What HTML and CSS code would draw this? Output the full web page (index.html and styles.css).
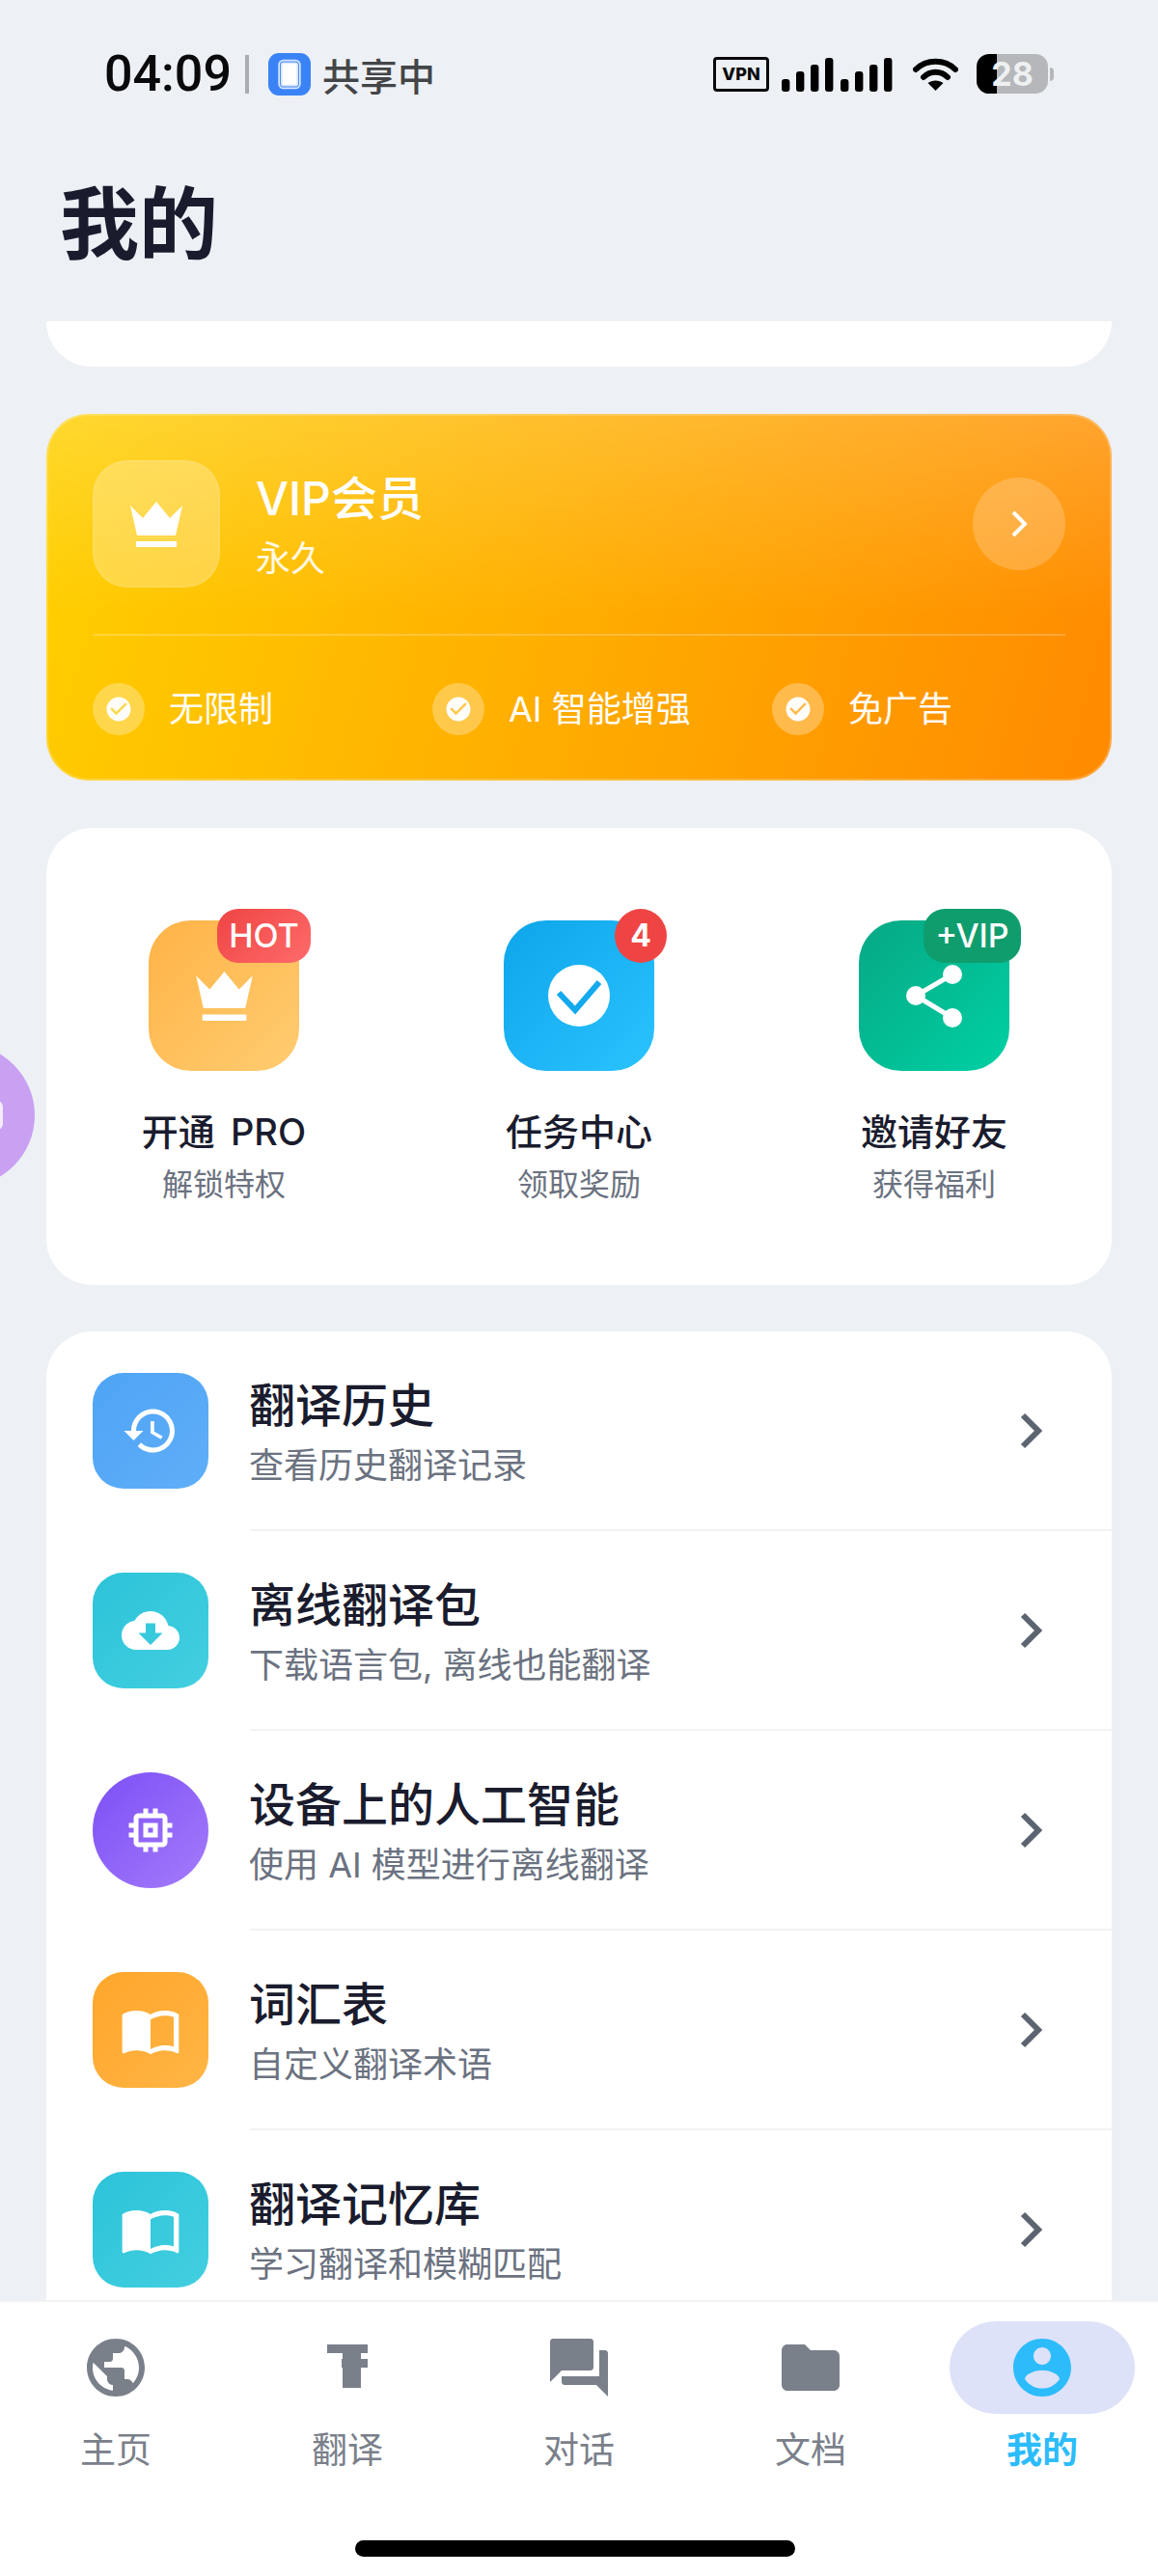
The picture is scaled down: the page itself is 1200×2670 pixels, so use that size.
FILE: index.html
```html
<!DOCTYPE html>
<html lang="zh-CN">
  <head>
    <meta charset="UTF-8" />
    <meta name="viewport" content="width=device-width, initial-scale=1.0" />
    <title>我的</title>
    <link rel="stylesheet" href="styles.css">
  </head>
  <body>
    <header class="top">
      <div class="status">
        <div class="status-left">
          <span class="time">04:09</span>
          <span class="status-sep"></span>
          <span class="share-app"><span class="share-app-inner"></span></span>
          <span class="share-text">共享中</span>
        </div>
        <div class="status-right">
          <span class="vpn">VPN</span>
          <svg class="signal" width="115" height="36" viewBox="0 0 115 36">
            <rect x="0" y="23" width="8.4" height="13" rx="3" />
            <rect x="15" y="15" width="8.4" height="21" rx="3" />
            <rect x="30" y="8" width="8.4" height="28" rx="3" />
            <rect x="45" y="1" width="8.4" height="35" rx="3" />
            <rect x="61" y="23" width="8.4" height="13" rx="3" />
            <rect x="76" y="15" width="8.4" height="21" rx="3" />
            <rect x="91" y="8" width="8.4" height="28" rx="3" />
            <rect x="106" y="1" width="8.4" height="35" rx="3" />
          </svg>
          <svg class="wifi" width="47" height="36" viewBox="0 0 47 36">
            <path d="M3 13C14 2 33 2 44 13M11 21C18 14 29 14 36 21" fill="none" stroke="#000" stroke-width="6" stroke-linecap="round" />
            <path d="M23.5 35L15.5 27C20 23.5 27 23.5 31.5 27Z" />
          </svg>
          <span class="battery">28</span>
          <span class="battery-tip"></span>
        </div>
      </div>
      <h1 class="page-title">我的</h1>
    </header>

    <main class="scroll">
      <div class="stub-card"></div>

      <section class="vip-card">
        <div class="vip-top">
          <div class="vip-icon">
            <svg width="54" height="47" viewBox="0 0 54 47"><path d="M0 4L13 17L27 0L41 17L54 4L47 35H7ZM6 41H48V47H6Z" fill="#fff" /></svg>
          </div>
          <div class="vip-text">
            <div class="vip-title">VIP会员</div>
            <div class="vip-sub">永久</div>
          </div>
          <div class="vip-arrow">
            <svg width="18" height="28" viewBox="0 0 18 28"><path d="M3 2L15 14L3 26" fill="none" stroke="#fff" stroke-width="4" /></svg>
          </div>
        </div>
        <div class="vip-line"></div>
        <div class="vip-features">
          <div class="feature">
            <span class="feature-dot"><svg width="30" height="30" viewBox="0 0 24 24"><path d="M12 2C6.48 2 2 6.48 2 12s4.48 10 10 10 10-4.48 10-10S17.52 2 12 2zm-2 15l-5-5 1.41-1.41L10 14.17l7.59-7.59L19 8l-9 9z" fill="#fff" /></svg></span>
            无限制
          </div>
          <div class="feature">
            <span class="feature-dot"><svg width="30" height="30" viewBox="0 0 24 24"><path d="M12 2C6.48 2 2 6.48 2 12s4.48 10 10 10 10-4.48 10-10S17.52 2 12 2zm-2 15l-5-5 1.41-1.41L10 14.17l7.59-7.59L19 8l-9 9z" fill="#fff" /></svg></span>
            AI 智能增强
          </div>
          <div class="feature">
            <span class="feature-dot"><svg width="30" height="30" viewBox="0 0 24 24"><path d="M12 2C6.48 2 2 6.48 2 12s4.48 10 10 10 10-4.48 10-10S17.52 2 12 2zm-2 15l-5-5 1.41-1.41L10 14.17l7.59-7.59L19 8l-9 9z" fill="#fff" /></svg></span>
            免广告
          </div>
        </div>
      </section>

      <section class="shortcuts">
        <div class="shortcut">
          <div class="shortcut-icon icon-pro">
            <span class="badge badge-hot">HOT</span>
            <svg width="59" height="51" viewBox="0 0 54 47"><path d="M0 4L13 17L27 0L41 17L54 4L47 35H7ZM6 41H48V47H6Z" fill="#fff" /></svg>
          </div>
          <div class="shortcut-name">开通 PRO</div>
          <div class="shortcut-sub">解锁特权</div>
        </div>
        <div class="shortcut">
          <div class="shortcut-icon icon-task">
            <span class="badge badge-num">4</span>
            <svg width="64" height="64" viewBox="0 0 64 64"><circle cx="32" cy="32" r="32" fill="#fff" /><path d="M11 29L28 47L53 18" fill="none" stroke="#12a9ee" stroke-width="6" /></svg>
          </div>
          <div class="shortcut-name">任务中心</div>
          <div class="shortcut-sub">领取奖励</div>
        </div>
        <div class="shortcut">
          <div class="shortcut-icon icon-invite">
            <span class="badge badge-vip">+VIP</span>
            <svg width="58" height="65" viewBox="0 0 58 65"><path d="M48 10L10 32L48 55" fill="none" stroke="#fff" stroke-width="5" /><circle cx="48" cy="10" r="10" fill="#fff" /><circle cx="10" cy="32" r="10" fill="#fff" /><circle cx="48" cy="55" r="10" fill="#fff" /></svg>
          </div>
          <div class="shortcut-name">邀请好友</div>
          <div class="shortcut-sub">获得福利</div>
        </div>
      </section>

      <section class="list-card">
        <div class="row">
          <div class="row-icon icon-history">
            <svg width="60" height="60" viewBox="0 0 24 24"><path d="M13 3c-4.97 0-9 4.03-9 9H1l3.89 3.89.07.14L9 12H6c0-3.87 3.13-7 7-7s7 3.13 7 7-3.13 7-7 7c-1.93 0-3.68-.79-4.94-2.06l-1.42 1.42C8.27 19.99 10.51 21 13 21c4.97 0 9-4.03 9-9s-4.03-9-9-9zm-1 5v5l4.28 2.54.72-1.21-3.5-2.08V8H12z" fill="#fff" /></svg>
          </div>
          <div class="row-main">
            <div class="row-text">
              <div class="row-title">翻译历史</div>
              <div class="row-sub">查看历史翻译记录</div>
            </div>
            <svg class="chevron" width="26" height="38" viewBox="0 0 26 38"><path d="M4 3L20 19L4 35" fill="none" stroke="#5c6470" stroke-width="6" /></svg>
          </div>
        </div>
        <div class="row">
          <div class="row-icon icon-offline">
            <svg width="60" height="60" viewBox="0 0 24 24"><path d="M19.35 10.04C18.67 6.59 15.64 4 12 4 9.11 4 6.6 5.64 5.35 8.04 2.34 8.36 0 10.91 0 14c0 3.31 2.69 6 6 6h13c2.76 0 5-2.24 5-5 0-2.64-2.05-4.78-4.65-4.96zM17 13l-5 5-5-5h3V9h4v4h3z" fill="#fff" /></svg>
          </div>
          <div class="row-main">
            <div class="row-text">
              <div class="row-title">离线翻译包</div>
              <div class="row-sub">下载语言包, 离线也能翻译</div>
            </div>
            <svg class="chevron" width="26" height="38" viewBox="0 0 26 38"><path d="M4 3L20 19L4 35" fill="none" stroke="#5c6470" stroke-width="6" /></svg>
          </div>
        </div>
        <div class="row">
          <div class="row-icon icon-chip">
            <svg width="60" height="60" viewBox="0 0 24 24"><path d="M15 9H9v6h6V9zm-2 4h-2v-2h2v2zm8-2V9h-2V7c0-1.1-.9-2-2-2h-2V3h-2v2h-2V3H9v2H7c-1.1 0-2 .9-2 2v2H3v2h2v2H3v2h2v2c0 1.1.9 2 2 2h2v2h2v-2h2v2h2v-2h2c1.1 0 2-.9 2-2v-2h2v-2h-2v-2h2zm-4 6H7V7h10v10z" fill="#fff" /></svg>
          </div>
          <div class="row-main">
            <div class="row-text">
              <div class="row-title">设备上的人工智能</div>
              <div class="row-sub">使用 AI 模型进行离线翻译</div>
            </div>
            <svg class="chevron" width="26" height="38" viewBox="0 0 26 38"><path d="M4 3L20 19L4 35" fill="none" stroke="#5c6470" stroke-width="6" /></svg>
          </div>
        </div>
        <div class="row">
          <div class="row-icon icon-glossary">
            <svg width="64" height="64" viewBox="0 0 24 24"><path d="M21 5c-1.11-.35-2.33-.5-3.5-.5-1.95 0-4.05.4-5.5 1.5-1.45-1.1-3.55-1.5-5.5-1.5S2.45 4.9 1 6v14.65c0 .25.25.5.5.5.1 0 .15-.05.25-.05C3.1 20.45 5.05 20 6.5 20c1.95 0 4.05.4 5.5 1.5 1.35-.85 3.8-1.5 5.5-1.5 1.65 0 3.35.3 4.75 1.05.1.05.15.05.25.05.25 0 .5-.25.5-.5V6c-.6-.45-1.25-.75-2-1zm0 13.5c-1.1-.35-2.3-.5-3.5-.5-1.7 0-4.15.65-5.5 1.5V8c1.35-.85 3.8-1.5 5.5-1.5 1.2 0 2.4.15 3.5.5v11.5z" fill="#fff" /></svg>
          </div>
          <div class="row-main">
            <div class="row-text">
              <div class="row-title">词汇表</div>
              <div class="row-sub">自定义翻译术语</div>
            </div>
            <svg class="chevron" width="26" height="38" viewBox="0 0 26 38"><path d="M4 3L20 19L4 35" fill="none" stroke="#5c6470" stroke-width="6" /></svg>
          </div>
        </div>
        <div class="row">
          <div class="row-icon icon-memory">
            <svg width="64" height="64" viewBox="0 0 24 24"><path d="M21 5c-1.11-.35-2.33-.5-3.5-.5-1.95 0-4.05.4-5.5 1.5-1.45-1.1-3.55-1.5-5.5-1.5S2.45 4.9 1 6v14.65c0 .25.25.5.5.5.1 0 .15-.05.25-.05C3.1 20.45 5.05 20 6.5 20c1.95 0 4.05.4 5.5 1.5 1.35-.85 3.8-1.5 5.5-1.5 1.65 0 3.35.3 4.75 1.05.1.05.15.05.25.05.25 0 .5-.25.5-.5V6c-.6-.45-1.25-.75-2-1zm0 13.5c-1.1-.35-2.3-.5-3.5-.5-1.7 0-4.15.65-5.5 1.5V8c1.35-.85 3.8-1.5 5.5-1.5 1.2 0 2.4.15 3.5.5v11.5z" fill="#fff" /></svg>
          </div>
          <div class="row-main">
            <div class="row-text">
              <div class="row-title">翻译记忆库</div>
              <div class="row-sub">学习翻译和模糊匹配</div>
            </div>
            <svg class="chevron" width="26" height="38" viewBox="0 0 26 38"><path d="M4 3L20 19L4 35" fill="none" stroke="#5c6470" stroke-width="6" /></svg>
          </div>
        </div>
      </section>
    </main>

    <div class="float-btn"><span class="float-btn-inner"></span></div>

    <nav class="tabbar">
      <div class="tabs">
        <div class="tab">
          <div class="tab-pill">
            <svg width="72" height="72" viewBox="0 0 24 24"><path d="M12 2C6.48 2 2 6.48 2 12s4.48 10 10 10 10-4.48 10-10S17.52 2 12 2zm-1 17.93c-3.95-.49-7-3.85-7-7.93 0-.62.08-1.21.21-1.79L9 15v1c0 1.1.9 2 2 2v1.93zm6.9-2.54c-.26-.81-1-1.39-1.9-1.39h-1v-3c0-.55-.45-1-1-1H8v-2h2c.55 0 1-.45 1-1V7h2c1.1 0 2-.9 2-2v-.41c2.93 1.19 5 4.06 5 7.41 0 2.08-.8 3.97-2.1 5.39z" fill="#7a808a" /></svg>
          </div>
          <div class="tab-label">主页</div>
        </div>
        <div class="tab">
          <div class="tab-pill">
            <svg width="72" height="72" viewBox="0 0 72 72"><path d="M15 12H57V21H50V27H57V36H50V57H31V36H30V27H31V21H15Z" fill="#7a808a" /></svg>
          </div>
          <div class="tab-label">翻译</div>
        </div>
        <div class="tab">
          <div class="tab-pill">
            <svg width="72" height="72" viewBox="0 0 24 24"><path d="M21 6h-2v9H6v2c0 .55.45 1 1 1h11l4 4V7c0-.55-.45-1-1-1zm-4 6V3c0-.55-.45-1-1-1H3c-.55 0-1 .45-1 1v14l4-4h10c.55 0 1-.45 1-1z" fill="#7a808a" /></svg>
          </div>
          <div class="tab-label">对话</div>
        </div>
        <div class="tab">
          <div class="tab-pill">
            <svg width="72" height="72" viewBox="0 0 24 24"><path d="M10 4H4c-1.1 0-1.99.9-1.99 2L2 18c0 1.1.9 2 2 2h16c1.1 0 2-.9 2-2V8c0-1.1-.9-2-2-2h-8l-2-2z" fill="#7a808a" /></svg>
          </div>
          <div class="tab-label">文档</div>
        </div>
        <div class="tab tab-active">
          <div class="tab-pill">
            <svg width="72" height="72" viewBox="0 0 24 24"><path d="M12 2C6.48 2 2 6.48 2 12s4.48 10 10 10 10-4.48 10-10S17.52 2 12 2zm0 3c1.66 0 3 1.34 3 3s-1.34 3-3 3-3-1.34-3-3 1.34-3 3-3zm0 14.2c-2.5 0-4.71-1.28-6-3.22.03-1.99 4-3.08 6-3.08 1.99 0 5.97 1.09 6 3.08-1.29 1.94-3.5 3.22-6 3.22z" fill="#2cbcfb" /></svg>
          </div>
          <div class="tab-label">我的</div>
        </div>
      </div>
      <div class="home-bar"></div>
    </nav>
  </body>
</html>
```

FILE: styles.css
```css
body {
  font-family: Inter, "Noto Sans CJK SC", sans-serif;
  background: #edf0f4;
  width: 1200px;
  height: 2670px;
  margin: 0;
  display: flex;
  flex-direction: column;
  overflow: hidden;
  position: relative;
}
.top {
  height: 333px;
  flex-shrink: 0;
}
.status {
  height: 153px;
  padding: 0 108px;
  display: flex;
  justify-content: space-between;
  align-items: center;
}
.status-left,
.status-right {
  display: flex;
  align-items: center;
}
.time {
  font-family: Roboto, sans-serif;
  font-size: 52px;
  font-weight: 500;
  color: #0a0a0c;
  width: 129px;
  white-space: nowrap;
}
.status-sep {
  width: 4px;
  height: 40px;
  background: #a9acb0;
  margin: 0 20px 0 17px;
}
.share-app {
  width: 44px;
  height: 44px;
  border-radius: 11px;
  background: #3a83f7;
  display: flex;
  justify-content: center;
  align-items: center;
}
.share-app-inner {
  width: 16px;
  height: 24px;
  background: #fff;
  border: 2px solid #dbe8ff;
  outline: 2px solid #dbe8ff;
  outline-offset: 1px;
  border-radius: 3px;
  box-sizing: content-box;
  transform: scale(0.9);
}
.share-text {
  font-size: 39px;
  font-weight: 500;
  color: #444548;
  margin-left: 12px;
}
.vpn {
  width: 58px;
  height: 36px;
  box-sizing: border-box;
  border: 3px solid #0a0a0c;
  border-radius: 4px;
  font-size: 18px;
  font-weight: 800;
  color: #0a0a0c;
  display: flex;
  justify-content: center;
  align-items: center;
}
.signal {
  margin-left: 13px;
}
.wifi {
  margin-left: 21px;
}
.battery {
  width: 74px;
  height: 41px;
  margin-left: 19px;
  border-radius: 13px;
  background: linear-gradient(to right, #000 21px, #b5b7ba 21px);
  color: #eef0f2;
  font-size: 34px;
  font-weight: 700;
  line-height: 41px;
  text-align: center;
}
.battery-tip {
  width: 4px;
  height: 14px;
  margin-left: 2px;
  border-radius: 0 4px 4px 0;
  background: #b5b7ba;
}
.page-title {
  margin: 42px 0 0 62px;
  font-size: 82px;
  font-weight: 700;
  line-height: 76px;
  color: #1a1c2e;
}

.scroll {
  flex: 1;
  min-height: 0;
  overflow: hidden;
}
.stub-card {
  height: 47px;
  margin: 0 48px 49px;
  background: #fff;
  border-radius: 0 0 48px 48px;
}

.vip-card {
  height: 380px;
  box-sizing: border-box;
  margin: 0 48px 49px;
  padding: 48px;
  border-radius: 44px;
  background: linear-gradient(180deg, rgba(255, 255, 255, 0.18), rgba(255, 255, 255, 0) 55%),
    linear-gradient(105deg, #ffd000, #ff8a00);
  box-shadow: inset 0 0 0 2px rgba(255, 255, 255, 0.22);
  color: #fff;
}
.vip-top {
  display: flex;
  align-items: center;
}
.vip-icon {
  width: 132px;
  height: 132px;
  border-radius: 36px;
  background: rgba(255, 255, 255, 0.25);
  box-shadow: inset 0 0 0 2px rgba(255, 255, 255, 0.08);
  display: flex;
  justify-content: center;
  align-items: center;
}
.vip-text {
  flex: 1;
  margin-left: 37px;
  padding-top: 8px;
}
.vip-title {
  font-size: 48px;
  font-weight: 500;
  line-height: 64px;
}
.vip-sub {
  font-size: 36px;
  line-height: 60px;
  opacity: 0.9;
}
.vip-arrow {
  width: 96px;
  height: 96px;
  border-radius: 50%;
  background: rgba(255, 255, 255, 0.2);
  display: flex;
  justify-content: center;
  align-items: center;
}
.vip-line {
  height: 2px;
  margin-top: 48px;
  background: rgba(255, 255, 255, 0.22);
}
.vip-features {
  margin-top: 49px;
  display: grid;
  grid-template-columns: 352px 352px 1fr;
}
.feature {
  display: flex;
  align-items: center;
  gap: 25px;
  font-size: 36px;
  line-height: 52px;
  opacity: 0.98;
}
.feature-dot {
  width: 54px;
  height: 54px;
  border-radius: 50%;
  background: rgba(255, 255, 255, 0.3);
  display: flex;
  justify-content: center;
  align-items: center;
}

.shortcuts {
  height: 474px;
  box-sizing: border-box;
  margin: 0 48px 48px;
  padding-top: 96px;
  background: #fff;
  border-radius: 48px;
  display: grid;
  grid-template-columns: repeat(3, 1fr);
}
.shortcut {
  display: flex;
  flex-direction: column;
  align-items: center;
}
.shortcut-icon {
  width: 156px;
  height: 156px;
  border-radius: 44px;
  position: relative;
  display: flex;
  justify-content: center;
  align-items: center;
}
.icon-pro {
  background: linear-gradient(135deg, #ffb347, #ffcc70);
}
.icon-task {
  background: linear-gradient(135deg, #0ea5ea, #2ac3ff);
}
.icon-invite {
  background: linear-gradient(135deg, #06a884, #00d0a4);
}
.badge {
  position: absolute;
  top: -12px;
  height: 56px;
  border-radius: 22px;
  color: #fff;
  font-size: 34px;
  font-weight: 500;
  line-height: 56px;
  text-align: center;
}
.badge-hot {
  left: 71px;
  width: 97px;
  background: linear-gradient(135deg, #ef4444, #ff6b6b);
}
.badge-num {
  left: 115px;
  width: 54px;
  border-radius: 50%;
  font-size: 32px;
  font-weight: 700;
  background: #ef4444;
}
.badge-vip {
  left: 67px;
  width: 101px;
  background: #0f9d6e;
}
.shortcut-name {
  margin-top: 35px;
  font-size: 38px;
  font-weight: 500;
  line-height: 56px;
  word-spacing: 6px;
  color: #1a1c2e;
}
.shortcut-sub {
  margin-top: 3px;
  font-size: 32px;
  line-height: 48px;
  color: #6b7280;
}

.list-card {
  margin: 0 48px;
  background: #fff;
  border-radius: 48px 48px 0 0;
}
.row {
  height: 207px;
  padding-left: 48px;
  display: flex;
}
.row-icon {
  width: 120px;
  height: 120px;
  margin-top: 43px;
  border-radius: 32px;
  flex-shrink: 0;
  display: flex;
  justify-content: center;
  align-items: center;
}
.icon-history {
  background: linear-gradient(135deg, #4ea4f5, #60aef8);
}
.icon-offline {
  background: linear-gradient(135deg, #2cc3d9, #43cfe0);
}
.icon-chip {
  border-radius: 50%;
  background: linear-gradient(135deg, #7c4ff5, #a47bfb);
}
.icon-glossary {
  background: linear-gradient(135deg, #ffa62b, #ffb545);
}
.icon-memory {
  background: linear-gradient(135deg, #2cc3d9, #43cfe0);
}
.row-main {
  flex: 1;
  margin-left: 43px;
  padding-top: 45px;
  box-sizing: border-box;
  border-bottom: 2px solid #f1f2f4;
  display: flex;
  justify-content: space-between;
}
.row-text {
  margin-left: -1px;
}
.row-title {
  font-size: 48px;
  font-weight: 500;
  line-height: 64px;
  color: #1a1c2e;
}
.row-sub {
  font-size: 36px;
  line-height: 60px;
  color: #6b7280;
}
.chevron {
  margin: 39px 70px 0 0;
}

.float-btn {
  position: absolute;
  left: -112px;
  top: 1082px;
  width: 148px;
  height: 148px;
  border-radius: 50%;
  background: #c9a0f2;
}
.float-btn-inner {
  position: absolute;
  left: 92px;
  top: 59px;
  width: 23px;
  height: 30px;
  border-radius: 6px;
  background: #f4ecfc;
}

.tabbar {
  height: 286px;
  flex-shrink: 0;
  box-sizing: border-box;
  background: #fff;
  border-top: 2px solid #f0f2f4;
  padding-top: 20px;
}
.tabs {
  display: grid;
  grid-template-columns: repeat(5, 240px);
}
.tab {
  display: flex;
  flex-direction: column;
  align-items: center;
}
.tab-pill {
  width: 192px;
  height: 96px;
  border-radius: 48px;
  display: flex;
  justify-content: center;
  align-items: center;
}
.tab-active .tab-pill {
  background: #dde2f8;
}
.tab-label {
  margin-top: 14px;
  font-size: 37px;
  line-height: 48px;
  color: #7a808a;
}
.tab-active .tab-label {
  color: #2cbcfb;
  font-weight: 700;
}
.home-bar {
  width: 456px;
  height: 17px;
  margin: 69px 0 0 368px;
  border-radius: 9px;
  background: #000;
}
```
